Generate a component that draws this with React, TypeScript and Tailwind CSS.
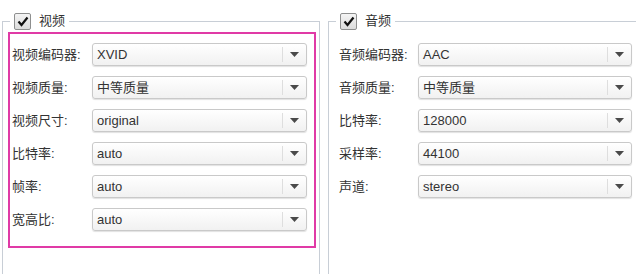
import React from "react";

const font = { fontFamily: '"Liberation Sans", "Noto Sans CJK SC", sans-serif' };

type Row = { label: string; value: string };

const videoRows: Row[] = [
  { label: "视频编码器:", value: "XVID" },
  { label: "视频质量:", value: "中等质量" },
  { label: "视频尺寸:", value: "original" },
  { label: "比特率:", value: "auto" },
  { label: "帧率:", value: "auto" },
  { label: "宽高比:", value: "auto" },
];

const audioRows: Row[] = [
  { label: "音频编码器:", value: "AAC" },
  { label: "音频质量:", value: "中等质量" },
  { label: "比特率:", value: "128000" },
  { label: "采样率:", value: "44100" },
  { label: "声道:", value: "stereo" },
];

function Check() {
  return (
    <span className="flex h-[17px] w-[17px] items-center justify-center rounded-[2px] border border-[#8e8f8f] bg-gradient-to-b from-[#f4f4f4] to-[#dcdcdc]">
      <svg width="12" height="11" viewBox="0 0 12 11">
        <path d="M1.5 5.5 L4.5 9 L10.5 1.5" fill="none" stroke="#111" strokeWidth="2.2" strokeLinejoin="miter" />
      </svg>
    </span>
  );
}

function Legend({ text }: { text: string }) {
  return (
    <legend className="ml-[7px] flex h-[20px] items-center gap-[8px] px-[4px]">
      <Check />
      <span className="text-[13px] text-[#333]">{text}</span>
    </legend>
  );
}

function Select({ value, width }: { value: string; width: string }) {
  return (
    <div
      className={`flex h-[23px] ${width} items-center rounded-[3px] border border-[#c9c9c9] bg-gradient-to-b from-white to-[#f1f1f1] shadow-[0_1px_1px_rgba(0,0,0,0.12)]`}
    >
      <span className="flex-1 pl-[4px] text-[13px] text-[#333]">{value}</span>
      <span className="h-[15px] w-px bg-[#dedede]" />
      <span className="flex w-[23px] justify-center">
        <svg width="9" height="5" viewBox="0 0 9 5">
          <path d="M0 0 H9 L4.5 5 Z" fill="#4a4a4a" />
        </svg>
      </span>
    </div>
  );
}

function Rows({ rows, labelW, selectW }: { rows: Row[]; labelW: string; selectW: string }) {
  return (
    <div className="flex flex-col gap-[10px]">
      {rows.map((r) => (
        <div key={r.label} className="flex items-center">
          <span className={`${labelW} text-[13px] text-[#333]`}>{r.label}</span>
          <Select value={r.value} width={selectW} />
        </div>
      ))}
    </div>
  );
}

export default function App() {
  return (
    <div className="h-[274px] w-[636px] overflow-hidden bg-white" style={font}>
      <div className="mt-[11px] flex gap-[8px] pl-[2px]">
        <fieldset className="h-[280px] w-[318px] shrink-0 border border-[#c8ced6]">
          <Legend text="视频" />
          <div className="ml-[5px] mr-[3px] mt-[1px] border-2 border-[#e03aa6] pb-[15px] pl-[2px] pr-[7px] pt-[9px]">
            <Rows rows={videoRows} labelW="w-[80px]" selectW="w-[215px]" />
          </div>
        </fieldset>
        <fieldset className="h-[280px] w-[318px] shrink-0 border border-[#c8ced6]">
          <Legend text="音频" />
          <div className="pl-[10px] pt-[12px]">
            <Rows rows={audioRows} labelW="w-[79px]" selectW="w-[214px]" />
          </div>
        </fieldset>
      </div>
    </div>
  );
}
